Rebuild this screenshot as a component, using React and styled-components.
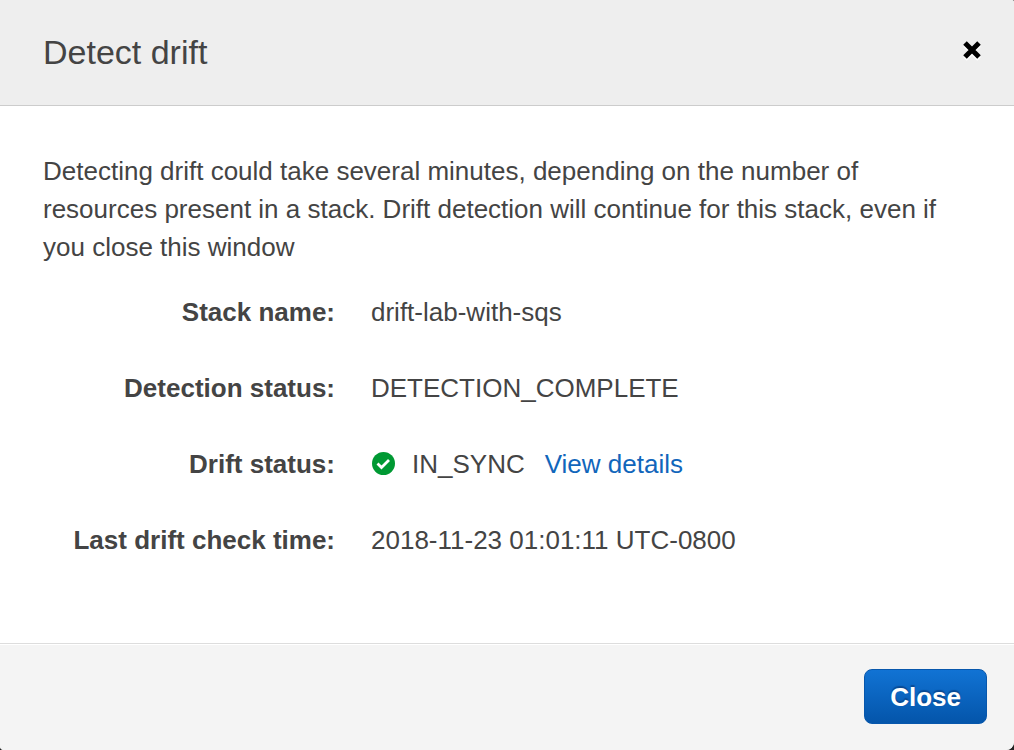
import React from "react";
import styled, { createGlobalStyle } from "styled-components";

const GlobalStyle = createGlobalStyle`
  * { box-sizing: border-box; }
  html, body, #root { height: 100%; }
  body {
    margin: 0;
    background: #222;
    color: #444;
    font-family: "Liberation Sans", Arial, sans-serif;
    font-size: 26px;
    line-height: 38px;
  }
`;

const Dialog = styled.section`
  display: flex;
  flex-direction: column;
  min-height: 100%;
  background: #fff;
  border-radius: 0 2px 8px 4px;
  overflow: hidden;
`;

const Header = styled.header`
  display: flex;
  align-items: flex-start;
  justify-content: space-between;
  padding: 32px 28px 33px 43px;
  background: #eee;
  border-bottom: 1px solid #ccc;
`;

const Title = styled.h1`
  margin: 0;
  font-size: 34px;
  font-weight: 400;
  line-height: 40px;
`;

const DismissButton = styled.button`
  display: flex;
  margin-top: 4px;
  padding: 4px;
  border: 0;
  background: none;
  color: #000;
  cursor: pointer;

  svg { filter: drop-shadow(0 2px 0 #fff); }
`;

const Body = styled.main`
  flex: 1;
  padding: 46px 43px;
`;

const Intro = styled.p`
  margin: 0 0 27px;
`;

const Details = styled.dl`
  display: grid;
  grid-template-columns: 292px 1fr;
  gap: 38px 36px;
  margin: 0;
`;

const Term = styled.dt`
  font-weight: 700;
  text-align: right;
`;

const Value = styled.dd`
  display: flex;
  align-items: center;
  margin: 0;
`;

const StatusText = styled.span`
  margin: 0 20px 0 16px;
`;

const DetailsLink = styled.a`
  color: #1166bb;
  text-decoration: none;
`;

const Footer = styled.footer`
  display: flex;
  justify-content: flex-end;
  padding: 25px 27px 26px;
  background: #f4f4f4;
  border-top: 1px solid #ddd;
  box-shadow: inset 0 1px #fff;
`;

const PrimaryButton = styled.button`
  height: 55px;
  padding: 0 25px;
  border: 1px solid #0757ac;
  border-radius: 8px;
  background: linear-gradient(#1173d4, #0455aa);
  color: #fff;
  font: inherit;
  font-weight: 700;
  text-shadow: 0 -2px 1px #0a4a94;
  cursor: pointer;
`;

export default function App() {
  return (
    <>
      <GlobalStyle />
      <Dialog role="dialog" aria-labelledby="title">
        <Header>
          <Title id="title">Detect drift</Title>
          <DismissButton aria-label="Dismiss">
            <svg width="20" height="20" viewBox="0 0 20 20">
              <path d="M3 3 17 17M17 3 3 17" stroke="currentColor" strokeWidth="5" />
            </svg>
          </DismissButton>
        </Header>
        <Body>
          <Intro>
            Detecting drift could take several minutes, depending on the number of resources
            present in a stack. Drift detection will continue for this stack, even if you close
            this window
          </Intro>
          <Details>
            <Term>Stack name:</Term>
            <Value>drift-lab-with-sqs</Value>
            <Term>Detection status:</Term>
            <Value>DETECTION_COMPLETE</Value>
            <Term>Drift status:</Term>
            <Value>
              <svg width="25" height="25" viewBox="0 0 25 25" aria-hidden="true">
                <circle cx="12.5" cy="11.5" r="11.5" fill="#009933" />
                <path
                  d="m6.5 11.5 4 4 7.5-7.5"
                  fill="none"
                  stroke="#fff"
                  strokeWidth="2.8"
                />
              </svg>
              <StatusText>IN_SYNC</StatusText>
              <DetailsLink href="#details">View details</DetailsLink>
            </Value>
            <Term>Last drift check time:</Term>
            <Value>2018-11-23 01:01:11 UTC-0800</Value>
          </Details>
        </Body>
        <Footer>
          <PrimaryButton>Close</PrimaryButton>
        </Footer>
      </Dialog>
    </>
  );
}
